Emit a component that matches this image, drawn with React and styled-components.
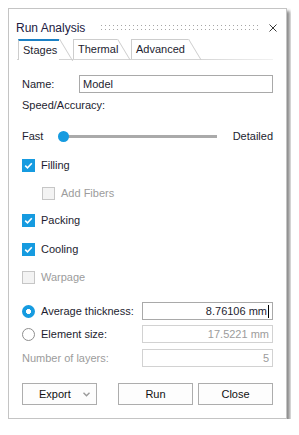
import React from 'react'
import styled, { createGlobalStyle, css } from 'styled-components'

const GlobalStyle = createGlobalStyle`
  body {
    margin: 8px;
    background: #ffffff;
    font-family: "Liberation Sans", Arial, sans-serif;
    font-size: 11px;
    color: #1d1d30;
  }
`

const BLUE = '#169be0'

export default function App() {
  return (
    <>
      <GlobalStyle />
      <Window>
        <TitleBar>
          <Title>Run Analysis</Title>
          <Grip />
          <CloseIcon viewBox="0 0 8 8" width="8" height="8">
            <path d="M0.5 0.5 L7.5 7.5 M7.5 0.5 L0.5 7.5" stroke="#3a3a3a" strokeWidth="1" />
          </CloseIcon>
        </TitleBar>

        <TabStrip>
          <Tab $active $w={41}>Stages</Tab>
          <Tab $w={44}>Thermal</Tab>
          <Tab $w={57}>Advanced</Tab>
        </TabStrip>

        <Body>
          <FieldRow $mt={15}>
            <Label $w={57}>Name:</Label>
            <Field>Model</Field>
          </FieldRow>

          <TextLine $mt={4}>Speed/Accuracy:</TextLine>

          <SliderRow $mt={15}>
            <Label $w={40}>Fast</Label>
            <Track>
              <Thumb />
            </Track>
            <EndLabel>Detailed</EndLabel>
          </SliderRow>

          <CheckRow $mt={13}>
            <CheckBox $checked><CheckMark /></CheckBox>
            <span>Filling</span>
          </CheckRow>
          <CheckRow $mt={12} $indent={20} $disabled>
            <CheckBox $disabled />
            <span>Add Fibers</span>
          </CheckRow>
          <CheckRow $mt={11}>
            <CheckBox $checked><CheckMark /></CheckBox>
            <span>Packing</span>
          </CheckRow>
          <CheckRow $mt={13}>
            <CheckBox $checked><CheckMark /></CheckBox>
            <span>Cooling</span>
          </CheckRow>
          <CheckRow $mt={12} $disabled>
            <CheckBox $disabled />
            <span>Warpage</span>
          </CheckRow>

          <FieldRow $mt={17}>
            <RadioLabel>
              <Radio $selected />
              <span>Average thickness:</span>
            </RadioLabel>
            <Field $right>8.76106 mm<Caret /></Field>
          </FieldRow>
          <FieldRow $mt={5}>
            <RadioLabel>
              <Radio />
              <span>Element size:</span>
            </RadioLabel>
            <Field $right $disabled>17.5221 mm</Field>
          </FieldRow>
          <FieldRow $mt={6}>
            <Label $w={120} $disabled>Number of layers:</Label>
            <Field $right $disabled>5</Field>
          </FieldRow>
        </Body>

        <ButtonRow>
          <Button $menu>
            <span>Export</span>
            <svg width="7" height="5" viewBox="0 0 7 5">
              <path d="M0.5 0.8 L3.5 3.8 L6.5 0.8" fill="none" stroke="#9a9a9a" strokeWidth="1.4" />
            </svg>
          </Button>
          <Button $push>Run</Button>
          <Button>Close</Button>
        </ButtonRow>
      </Window>
    </>
  )
}

const CheckMark = () => (
  <svg width="11" height="11" viewBox="0 0 11 11">
    <path d="M2.2 5.6 L4.5 7.8 L8.8 3.2" fill="none" stroke="#ffffff" strokeWidth="1.6" />
  </svg>
)

const Window = styled.div`
  width: 279px;
  box-sizing: border-box;
  border: 1px solid #c4c4c4;
  background: #ffffff;
  box-shadow: 3px 3px 3px rgba(0, 0, 0, 0.45);
  padding-bottom: 13px;
`

const TitleBar = styled.div`
  display: flex;
  align-items: center;
  height: 30px;
  box-sizing: border-box;
  padding: 8px 9px 0 7px;
`

const Title = styled.div`
  font-size: 12px;
  color: #22203f;
  white-space: nowrap;
`

const Grip = styled.div`
  width: 157px;
  height: 6px;
  margin-left: 16px;
  margin-top: -1px;
  background-image: linear-gradient(to right, #a6a6a6 1px, transparent 1px);
  background-size: 4px 4px;
  -webkit-mask-image: linear-gradient(to bottom, #000 1px, transparent 1px);
  -webkit-mask-size: 4px 4px;
  mask-image: linear-gradient(to bottom, #000 1px, transparent 1px);
  mask-size: 4px 4px;
`

const CloseIcon = styled.svg`
  margin-left: auto;
  margin-top: -1px;
`

const TabStrip = styled.div`
  display: flex;
  height: 20px;
  margin: 0 13px 0 8px;
  padding-left: 1px;
  border-bottom: 1px solid transparent;
  border-image: linear-gradient(to right, #d4d4d4 70%, #f2f2f2) 1;
`

const Tab = styled.div`
  position: relative;
  width: ${p => p.$w}px;
  box-sizing: border-box;
  height: 20px;
  padding-left: 4px;
  margin-right: 14px;
  border-left: 1px solid #cdcdcd;
  border-top: 1px solid #cdcdcd;
  line-height: 19px;
  font-size: 11px;
  color: #1d1d30;
  background: #ffffff;

  &::after {
    content: '';
    position: absolute;
    left: 100%;
    top: -1px;
    height: 21px;
    border-left: 1px solid #cdcdcd;
    transform: skewX(31deg);
    transform-origin: top left;
  }

  ${p => p.$active && css`
    height: 21px;
    margin-bottom: -1px;
    border-top: 2px solid #1b80c4;
    line-height: 18px;
    z-index: 1;

    &::after {
      top: -2px;
      height: 22px;
    }
  `}
`

const Body = styled.div`
  display: flex;
  flex-direction: column;
  padding: 0 13px;
`

const FieldRow = styled.div`
  display: flex;
  align-items: center;
  height: 18px;
  margin-top: ${p => p.$mt}px;
`

const Label = styled.div`
  width: ${p => p.$w}px;
  flex-shrink: 0;
  white-space: nowrap;
  color: ${p => (p.$disabled ? '#9c9c9c' : '#1d1d30')};
`

const TextLine = styled.div`
  line-height: 16px;
  margin-top: ${p => p.$mt}px;
`

const Field = styled.div`
  flex: 1;
  height: 18px;
  box-sizing: border-box;
  display: flex;
  align-items: center;
  justify-content: ${p => (p.$right ? 'flex-end' : 'flex-start')};
  padding: 0 3px 0 3px;
  border: 1px solid ${p => (p.$disabled ? '#d2d2d2' : '#a9a9a9')};
  color: ${p => (p.$disabled ? '#9c9c9c' : '#1d1d30')};
  background: #ffffff;
  white-space: nowrap;
`

const Caret = styled.span`
  display: inline-block;
  width: 1px;
  height: 13px;
  margin-left: 1px;
  background: #000000;
`

const SliderRow = styled.div`
  display: flex;
  align-items: center;
  height: 16px;
  margin-top: ${p => p.$mt}px;
`

const Track = styled.div`
  position: relative;
  width: 155px;
  height: 3px;
  background: #aaaaaa;
`

const Thumb = styled.div`
  position: absolute;
  left: -4px;
  top: -4px;
  width: 11px;
  height: 11px;
  border-radius: 50%;
  background: ${BLUE};
`

const EndLabel = styled.div`
  margin-left: auto;
`

const CheckRow = styled.div`
  display: flex;
  align-items: center;
  gap: 6px;
  height: 16px;
  margin-top: ${p => p.$mt}px;
  padding-left: ${p => p.$indent || 0}px;
  color: ${p => (p.$disabled ? '#9c9c9c' : '#1d1d30')};
`

const CheckBox = styled.div`
  width: 13px;
  height: 13px;
  box-sizing: border-box;
  display: flex;
  align-items: center;
  justify-content: center;
  background: ${p => (p.$checked ? BLUE : '#f3f3f3')};
  border: ${p => (p.$checked ? 'none' : '1px solid #c6c6c6')};
`

const RadioLabel = styled.div`
  display: flex;
  align-items: center;
  gap: 6px;
  width: 120px;
  flex-shrink: 0;
  white-space: nowrap;
`

const Radio = styled.div`
  width: 13px;
  height: 13px;
  box-sizing: border-box;
  border-radius: 50%;
  ${p => (p.$selected
    ? css`
        background: radial-gradient(circle, #ffffff 2.2px, ${BLUE} 2.8px);
      `
    : css`
        border: 1px solid #8e8e8e;
        background: #ffffff;
      `)}
`

const ButtonRow = styled.div`
  display: flex;
  margin-top: 16px;
  padding: 0 13px;
`

const Button = styled.div`
  width: 75px;
  height: 22px;
  box-sizing: border-box;
  display: flex;
  align-items: center;
  justify-content: ${p => (p.$menu ? 'space-between' : 'center')};
  padding: ${p => (p.$menu ? '0 6px 0 16px' : '0')};
  border: 1px solid #adadad;
  background: #fdfdfd;
  font-size: 11px;
  color: #111111;
  margin-left: ${p => (p.$push ? 'auto' : '5px')};

  &:first-child {
    margin-left: 0;
  }
`
